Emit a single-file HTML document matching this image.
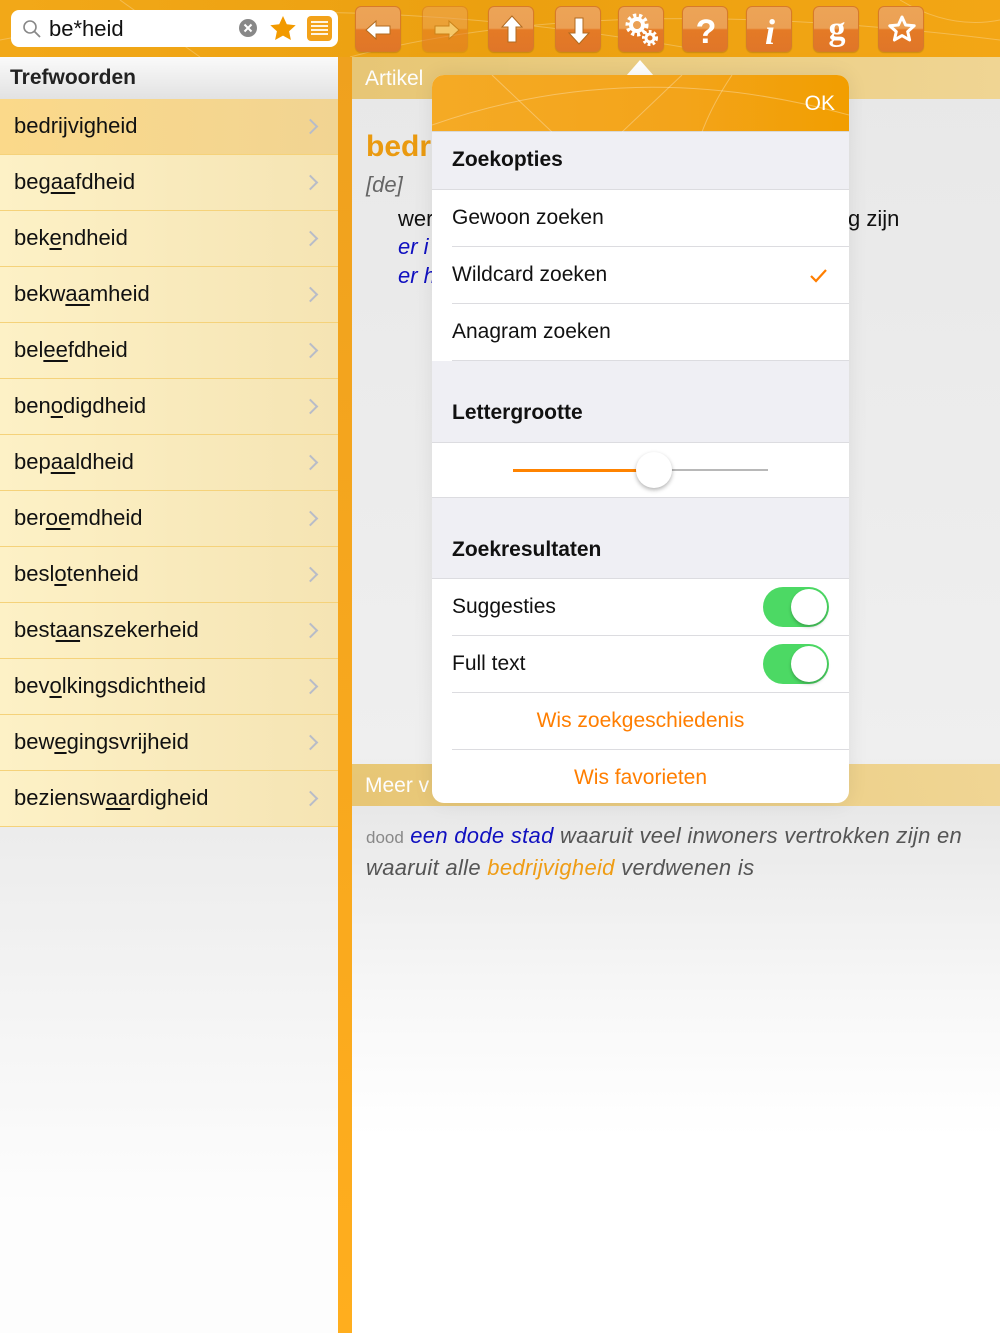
<!DOCTYPE html>
<html><head><meta charset="utf-8">
<style>
*{margin:0;padding:0;box-sizing:border-box}
body{width:1000px;height:1333px;overflow:hidden;position:relative;font-family:"Liberation Sans",sans-serif;background:#fff}
.top{position:absolute;left:0;top:0;width:1000px;height:57px;background:linear-gradient(90deg,#f2a818,#eba010 50%,#f3a615);overflow:hidden}
.search{position:absolute;left:11px;top:10px;width:327px;height:37px;background:#fff;border-radius:8px}
.search .txt{position:absolute;left:38px;top:6px;font-size:22px;color:#111}
.btn{position:absolute;top:6px;width:46px;height:46px;border-radius:6px;background:linear-gradient(#eca457,#eba054 48%,#e47a26 52%,#e07628);border:1px solid #d77a2a;box-shadow:0 1px 1px rgba(0,0,0,.15)}
.btn svg{position:absolute;left:0;top:0}
.leftpanel{position:absolute;left:0;top:57px;width:338px;height:1276px;background:linear-gradient(#e9e9e9 0,#ececec 770px,#fdfdfd 1150px)}
.lhead{height:42px;background:linear-gradient(#fafafa,#e2e2e2);font-weight:bold;font-size:21px;color:#222;padding:9px 10px}
.row{position:relative;height:56px;border-bottom:1.5px solid #f5d27a;background:linear-gradient(90deg,#fdf1c6,#f5e4b3);font-size:22px;color:#111;padding:14px 14px}
.row.sel{background:linear-gradient(90deg,#fbd98a,#f1d492)}
.row u{text-decoration:underline;text-underline-offset:3px}
.row:after{content:"";position:absolute;right:22px;top:22px;width:9px;height:9px;border-right:2px solid #b8bcc8;border-top:2px solid #b8bcc8;transform:rotate(45deg)}
.stripe{position:absolute;left:338px;top:57px;width:14px;height:1276px;background:linear-gradient(#efa11e,#ffae1e)}
.main{position:absolute;left:352px;top:57px;width:648px;height:1276px;background:linear-gradient(#e8e8e8 0,#efefef 700px,#e8e8e8 750px,#f8f8f8 950px,#fff 1080px)}
.bar{position:absolute;left:0;width:648px;height:42px;background:linear-gradient(90deg,#e7c56f,#f0d48f);color:#fff;font-size:21px;padding:10px 13px;opacity:.95}
.pop{position:absolute;left:432px;top:75px;width:417px;height:728px;background:#fff;border-radius:12px;overflow:hidden;box-shadow:0 0 20px rgba(0,0,0,.08)}
.ph{height:57px;background:linear-gradient(90deg,#f5aa25,#f3a41a 60%,#f29e00);position:relative;border-bottom:1px solid #d8d8d8}
.ph span{position:absolute;right:14px;top:17px;color:#fff;font-size:21px}
.g{background:#efeff4;position:relative}
.g b{position:absolute;left:20px;font-size:21px;color:#111}
.it{height:57px;position:relative;font-size:21px;color:#111;padding:16px 20px}
.it:after{content:"";position:absolute;left:20px;right:0;bottom:0;height:1px;background:#dcdce0}
.it.c{text-align:center;color:#ff7e00}
.tg{position:absolute;right:20px;top:8px;width:66px;height:40px;border-radius:20px;background:#4cd964}
.tg:after{content:"";position:absolute;right:2px;top:2px;width:36px;height:36px;border-radius:50%;background:#fff;box-shadow:0 2px 3px rgba(0,0,0,.25)}
</style></head><body>
<div class="top">
<svg width="1000" height="57" style="position:absolute;left:0;top:0" fill="none" stroke="rgba(255,255,255,.25)" stroke-width="1"><path d="M0 40 Q300 -20 700 50"/><path d="M350 57 Q600 -10 1000 40"/><path d="M120 0 L200 57"/><path d="M900 0 Q950 30 1000 20"/></svg>
<div class="search">
<svg width="24" height="24" style="position:absolute;left:10px;top:8px"><circle cx="9" cy="9" r="6" stroke="#888" stroke-width="1.6" fill="none"/><path d="M13.5 13.5L19 19" stroke="#888" stroke-width="1.8"/></svg>
<div class="txt">be*heid</div>
<svg width="22" height="22" style="position:absolute;left:227px;top:8px"><circle cx="10" cy="10" r="9" fill="#888"/><path d="M6.5 6.5l7 7M13.5 6.5l-7 7" stroke="#fff" stroke-width="2"/></svg>
<svg width="30" height="30" style="position:absolute;left:257px;top:4px"><path d="M15 2l3.8 8.2 8.9 1-6.6 6 1.8 8.8L15 21.6 7.1 26l1.8-8.8-6.6-6 8.9-1z" fill="#f29a00"/></svg>
<svg width="28" height="28" style="position:absolute;left:295px;top:5px"><rect x="1" y="1" width="25" height="25" rx="4" fill="#f3a21a"/><path d="M5 7h17M5 11h17M5 15h17M5 19h17" stroke="#fff" stroke-width="1.8"/></svg>
</div>
<div class="btn" style="left:355px"><svg width="46" height="46"><path d="M10 23l10-9v5h14v8H20v5z" fill="#fff" stroke="#b06a20" stroke-width="1"/></svg></div>
<div class="btn" style="left:422px;opacity:.55"><svg width="46" height="46"><path d="M36 23l-10-9v5H12v8h14v5z" fill="#fde7b0" stroke="#b06a20" stroke-width="1"/></svg></div>
<div class="btn" style="left:488px"><svg width="46" height="46"><path d="M23 9l-10 11h6v15h8V20h6z" fill="#fff" stroke="#b06a20" stroke-width="1"/></svg></div>
<div class="btn" style="left:555px"><svg width="46" height="46"><path d="M23 37l-10-11h6V11h8v15h6z" fill="#fff" stroke="#b06a20" stroke-width="1"/></svg></div>
<div class="btn" style="left:618px"><svg width="46" height="46"><circle cx="18" cy="18" r="9" fill="none" stroke="#fff" stroke-width="5" stroke-dasharray="3 2.5"/><circle cx="18" cy="18" r="6" fill="none" stroke="#fff" stroke-width="4"/><circle cx="31" cy="31" r="6" fill="none" stroke="#fff" stroke-width="4" stroke-dasharray="2.5 2"/><circle cx="31" cy="31" r="4" fill="none" stroke="#fff" stroke-width="3"/></svg></div>
<div class="btn" style="left:682px"><svg width="46" height="46"><text x="23" y="36" text-anchor="middle" font-family="Liberation Sans" font-weight="bold" font-size="34" fill="#fff">?</text></svg></div>
<div class="btn" style="left:746px"><svg width="46" height="46"><text x="23" y="37" text-anchor="middle" font-family="Liberation Serif" font-style="italic" font-weight="bold" font-size="36" fill="#fff">i</text></svg></div>
<div class="btn" style="left:813px"><svg width="46" height="46"><text x="23" y="33" text-anchor="middle" font-family="Liberation Serif" font-weight="bold" font-size="34" fill="#fff">g</text></svg></div>
<div class="btn" style="left:878px"><svg width="46" height="46"><path d="M23 10l3.6 8 8.6.8-6.5 5.8 1.9 8.4L23 28.6 15.4 33l1.9-8.4-6.5-5.8 8.6-.8z" fill="none" stroke="#fff" stroke-width="3" stroke-linejoin="round"/></svg></div>
</div>

<div class="leftpanel">
<div class="lhead">Trefwoorden</div>
<div class="row sel">bedri<u>j</u>vigheid</div>
<div class="row">beg<u>aa</u>fdheid</div>
<div class="row">bek<u>e</u>ndheid</div>
<div class="row">bekw<u>aa</u>mheid</div>
<div class="row">bel<u>ee</u>fdheid</div>
<div class="row">ben<u>o</u>digdheid</div>
<div class="row">bep<u>aa</u>ldheid</div>
<div class="row">ber<u>oe</u>mdheid</div>
<div class="row">besl<u>o</u>tenheid</div>
<div class="row">best<u>aa</u>nszekerheid</div>
<div class="row">bev<u>o</u>lkingsdichtheid</div>
<div class="row">bew<u>e</u>gingsvrijheid</div>
<div class="row">beziensw<u>aa</u>rdigheid</div>
</div>
<div class="stripe"></div>
<div class="main">
<div class="bar" style="top:0">Artikel</div>
<div style="position:absolute;left:14px;top:73px;font-size:30px;font-weight:bold;color:#ea9a10">bedr</div>
<div style="position:absolute;left:14px;top:115px;font-size:22px;font-style:italic;color:#666">[de]</div>
<div style="position:absolute;left:46px;top:149px;font-size:22px;color:#111">wer</div>
<div style="position:absolute;left:496px;top:149px;font-size:22px;color:#111">g zijn</div>
<div style="position:absolute;left:46px;top:177px;font-size:22px;font-style:italic;color:#1010c0">er i</div>
<div style="position:absolute;left:46px;top:206px;font-size:22px;font-style:italic;color:#1010c0">er h</div>
<div class="bar" style="top:707px">Meer v</div>
<div style="position:absolute;left:14px;top:764px;width:630px;font-size:22px;line-height:30px;font-style:italic;color:#555;letter-spacing:0.3px"><span style="font-style:normal;font-size:17px;color:#888;letter-spacing:0">dood</span> <span style="color:#1010c0">een dode stad</span> waaruit veel inwoners vertrokken zijn en waaruit alle <span style="color:#ef9c14">bedrijvigheid</span> verdwenen is</div>
</div>

<svg width="30" height="18" style="position:absolute;left:626px;top:58px"><path d="M0 18L14 2L28 18z" fill="#fff"/></svg>
<div class="pop">
<div class="ph"><svg width="417" height="57" style="position:absolute;left:0;top:0" fill="none" stroke="rgba(255,255,255,.3)"><path d="M0 50 Q200 -20 417 40"/><path d="M60 0 L120 57"/><path d="M250 0 L190 57"/><path d="M300 0 Q280 30 270 57"/></svg><span>OK</span></div>
<div class="g" style="height:57px"><b style="top:16px">Zoekopties</b></div>
<div style="height:1px;background:#dcdce0"></div>
<div class="it">Gewoon zoeken</div>
<div class="it">Wildcard zoeken<svg width="20" height="16" style="position:absolute;right:20px;top:21px"><path d="M2 8l5 5 10-11" fill="none" stroke="#ff7e00" stroke-width="2.2"/></svg></div>
<div class="it" style="height:57px">Anagram zoeken</div>
<div class="g" style="height:81px"><b style="top:40px">Lettergrootte</b></div>
<div style="height:56px;position:relative;border-top:1px solid #dcdce0;border-bottom:1px solid #dcdce0">
<div style="position:absolute;left:81px;top:26px;width:140px;height:3px;background:#ff8300"></div>
<div style="position:absolute;left:221px;top:26px;width:115px;height:2px;background:#b8b8b8"></div>
<div style="position:absolute;left:204px;top:9px;width:36px;height:36px;border-radius:50%;background:#fff;box-shadow:0 2px 4px rgba(0,0,0,.3)"></div>
</div>
<div class="g" style="height:80px"><b style="top:40px">Zoekresultaten</b></div>
<div style="height:1px;background:#dcdce0"></div>
<div class="it">Suggesties<div class="tg"></div></div>
<div class="it">Full text<div class="tg"></div></div>
<div class="it c">Wis zoekgeschiedenis</div>
<div class="it c" style="height:54px">Wis favorieten</div>
</div>
</body></html>
